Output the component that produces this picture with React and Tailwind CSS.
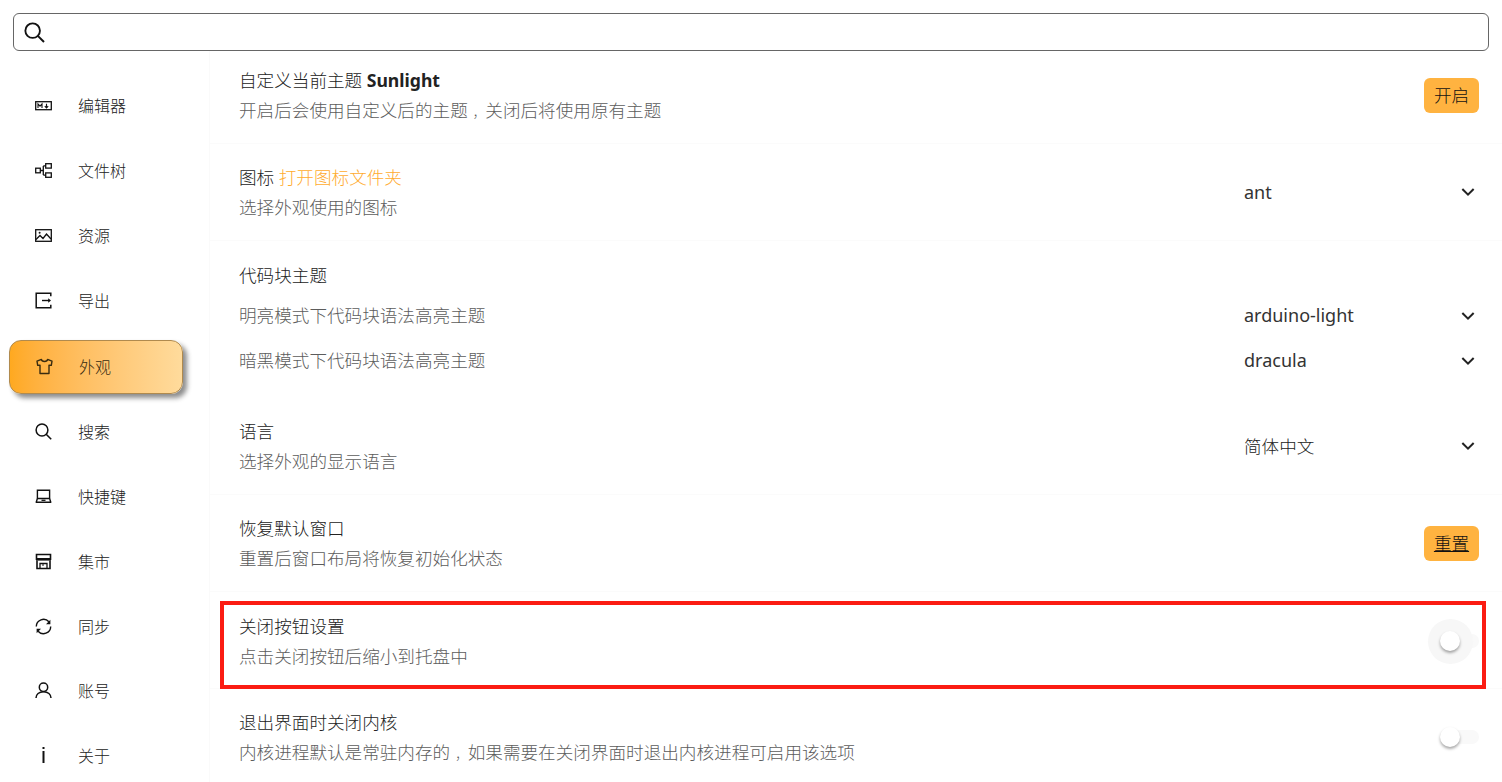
import React from 'react';
import { RiArrowDownSLine } from 'react-icons/ri';

const font = { fontFamily: '"Noto Sans", "Noto Sans CJK SC", sans-serif' };

function Svg({ children, size = 17 }) {
    return (
        <svg width={size} height={size} viewBox="0 0 17 17" fill="none" stroke="currentColor" strokeWidth="1.3" className="shrink-0">
            {children}
        </svg>
    );
}

const MarkdownIcon = () => (
    <Svg>
        <rect x="0.7" y="4.7" width="15.6" height="8" />
        <path d="M3 11V7l2 2.2L7 7v4" strokeWidth="1.1" />
        <path d="M11.5 6.8v4M9.8 9.2l1.7 1.8 1.7-1.8" strokeWidth="1.1" />
    </Svg>
);
const TreeIcon = () => (
    <Svg>
        <rect x="0.7" y="6.2" width="4.6" height="4.6" />
        <rect x="10.7" y="1.7" width="5.6" height="4.4" />
        <rect x="10.7" y="10.9" width="5.6" height="4.4" />
        <path d="M5.3 8.5h3M8.3 3.9v9.2M8.3 3.9h2.4M8.3 13.1h2.4" />
    </Svg>
);
const ImageIcon = () => (
    <Svg>
        <rect x="0.7" y="2.7" width="15.6" height="11.6" />
        <path d="M1 12.5l4-4 3 3 3.5-4.5 4.5 5" />
        <circle cx="4.6" cy="5.8" r="1" fill="currentColor" stroke="none" />
    </Svg>
);
const ExportIcon = () => (
    <Svg>
        <path d="M15.8 4.2V1.2H1.2v14.6h14.6v-3" strokeWidth="1.5" />
        <path d="M7 8.5h7.5" strokeWidth="1.4" />
        <path d="M13.2 6.3L16 8.5l-2.8 2.2z" fill="currentColor" stroke="none" />
    </Svg>
);
const ShirtIcon = () => (
    <Svg>
        <path d="M5.4 1.4L1 3.2l0.7 4.2 2.3-0.3v8.4h9V7.1l2.3 0.3L16 3.2l-4.4-1.8c-0.4 2.8-5.8 2.8-6.2 0z" strokeLinejoin="round" strokeWidth="1.4" />
    </Svg>
);
const SearchIcon = ({ size = 17 }) => (
    <svg width={size} height={size} viewBox="0 0 17 17" fill="none" stroke="currentColor" strokeWidth="1.5" className="shrink-0">
        <circle cx="7" cy="7" r="5.9" />
        <path d="M11.2 11.2l5 5" strokeWidth="1.6" />
    </svg>
);
const LaptopIcon = () => (
    <Svg>
        <path d="M2.4 10.5V2.2h12.2v8.3" strokeWidth="1.4" />
        <path d="M2.4 10.5h12.2l1.2 3.8H1.2z" strokeWidth="1.4" strokeLinejoin="round" />
        <path d="M6.5 12.3h4" />
    </Svg>
);
const StoreIcon = () => (
    <Svg>
        <path d="M1.5 7V1.5h14V7" strokeWidth="1.6" />
        <path d="M1 5h15v2.6H1z" fill="currentColor" stroke="none" />
        <path d="M2 7.5v8h13v-8" strokeWidth="1.6" />
        <path d="M5 15v-4.5h7V15" strokeWidth="1.3" />
        <path d="M8 11v2" strokeWidth="1" />
    </Svg>
);
const SyncIcon = () => (
    <Svg>
        <path d="M1.3 8.5a7.2 7.2 0 0 1 12.6-4.7" strokeWidth="1.4" />
        <path d="M15.7 8.5a7.2 7.2 0 0 1-12.6 4.7" strokeWidth="1.4" />
        <path d="M15.4 1.8v4.4H11z" fill="currentColor" stroke="none" />
        <path d="M1.6 15.2v-4.4H6z" fill="currentColor" stroke="none" />
    </Svg>
);
const UserIcon = () => (
    <Svg>
        <circle cx="8.5" cy="5.2" r="4.2" strokeWidth="1.5" />
        <path d="M1 16c0-3.6 3-6.3 7.5-6.3s7.5 2.7 7.5 6.3" strokeWidth="1.5" />
    </Svg>
);
const InfoIcon = () => (
    <Svg>
        <rect x="7.5" y="0" width="2" height="2" fill="currentColor" stroke="none" />
        <rect x="7.5" y="4" width="2" height="12" fill="currentColor" stroke="none" />
    </Svg>
);

const navItems = [
    { label: '编辑器', icon: MarkdownIcon },
    { label: '文件树', icon: TreeIcon },
    { label: '资源', icon: ImageIcon },
    { label: '导出', icon: ExportIcon },
    { label: '外观', icon: ShirtIcon, active: true },
    { label: '搜索', icon: SearchIcon },
    { label: '快捷键', icon: LaptopIcon },
    { label: '集市', icon: StoreIcon },
    { label: '同步', icon: SyncIcon },
    { label: '账号', icon: UserIcon, nudge: '-mt-px' },
    { label: '关于', icon: InfoIcon },
];

function NavItem({ label, icon: Icon, active, nudge = '' }) {
    if (active) {
        return (
            <div className="h-[65px] mt-px shrink-0 flex items-center pl-[9px]">
                <div className="w-[174px] h-[54px] flex items-center pl-[26px] rounded-[12px] border border-[#b08a4e] bg-gradient-to-r from-[#ffa91f] to-[#ffdb9c] shadow-[4px_4px_5px_rgba(0,0,0,0.45)] text-[#3a2c10]">
                    <Icon />
                    <span className="ml-[26px] text-base font-light">{label}</span>
                </div>
            </div>
        );
    }
    return (
        <div className={`h-[65px] shrink-0 flex items-center pl-[35px] text-[#111] ${nudge}`}>
            <Icon />
            <span className="ml-[26px] text-base font-light text-[#222]">{label}</span>
        </div>
    );
}

// the comma sits mid-cell in the reference, the CJK glyph sits left
function Comma() {
    return <span className="pl-[5px] text-[12.6px] leading-none">，</span>;
}

function Title({ children }) {
    return <div className="text-[17.6px] leading-[30px] text-[#222] font-light">{children}</div>;
}

function Desc({ children }) {
    return <div className="text-[17.6px] leading-[31px] text-[#5c5c5c] font-light">{children}</div>;
}

function Select({ value, cjk }) {
    return (
        <div className="w-[236px] flex items-center justify-between text-[18px] text-[#333]">
            <span className={cjk ? 'text-[17.6px] font-light text-[#222]' : ''}>{value}</span>
            <RiArrowDownSLine size={24} className="text-[#222]" />
        </div>
    );
}

function Button({ children }) {
    return (
        <div className="w-[55px] h-[35px] mr-[1px] flex items-center justify-center rounded-[6px] bg-[#ffb340] text-[17.6px] text-[#111] font-light">
            {children}
        </div>
    );
}

function Toggle({ halo }) {
    return (
        <div className="relative w-[39px] h-[14px] mr-[1px]">
            <div className="absolute left-[6px] right-0 top-0 bottom-0 rounded-full bg-[#f9f9f9]" />
            {halo && <div className="absolute left-[-12px] top-[-15px] w-[45px] h-[45px] rounded-full bg-[#f7f7f7]" />}
            <div className="absolute left-0 top-[-3px] w-[20px] h-[20px] rounded-full bg-white shadow-[0_2px_3px_rgba(0,0,0,0.35)]" />
        </div>
    );
}

function Row({ title, desc, right, className = 'h-[97px]' }) {
    return (
        <div className={`relative flex items-center justify-between shrink-0 border-b border-[#fbfbfb] pl-[29px] pr-[22px] ${className}`}>
            <div>
                <Title>{title}</Title>
                <Desc>{desc}</Desc>
            </div>
            {right}
        </div>
    );
}

export default function App() {
    return (
        <div className="w-[1502px] h-[782px] overflow-hidden bg-white flex flex-col" style={font}>
            <div className="shrink-0 mx-[13px] mt-[13px] h-[38px] rounded-[6px] border border-[#666] flex items-center pl-[10px] text-[#111]">
                <SearchIcon size={21} />
            </div>
            <div className="flex flex-1 min-h-0">
                <aside className="w-[209px] shrink-0 pt-[22px] flex flex-col">
                    {navItems.map((item) => (
                        <NavItem key={item.label} {...item} />
                    ))}
                </aside>
                <main className="flex-1 flex flex-col border-l border-[#fafafa]">
                    <Row
                        className="h-[93px] pb-[3px] border-[#f8f8f8]"
                        title={<>自定义当前主题 <b className="font-bold text-[#222]">Sunlight</b></>}
                        desc={<>开启后会使用自定义后的主题<Comma />关闭后将使用原有主题</>}
                        right={<Button>开启</Button>}
                    />
                    <Row
                        title={<>图标 <span className="text-[#ffab2e]">打开图标文件夹</span></>}
                        desc="选择外观使用的图标"
                        right={<Select value="ant" />}
                    />
                    <div className="h-[157px] shrink-0 pt-[19px] pl-[29px] pr-[22px] flex flex-col">
                        <Title>代码块主题</Title>
                        <div className="mt-[3px] h-[45px] flex items-center justify-between">
                            <span className="text-[17.6px] text-[#5c5c5c] font-light">明亮模式下代码块语法高亮主题</span>
                            <Select value="arduino-light" />
                        </div>
                        <div className="h-[45px] flex items-center justify-between">
                            <span className="text-[17.6px] text-[#5c5c5c] font-light">暗黑模式下代码块语法高亮主题</span>
                            <Select value="dracula" />
                        </div>
                    </div>
                    <Row title="语言" desc="选择外观的显示语言" right={<Select cjk value="简体中文" />} />
                    <Row title="恢复默认窗口" desc="重置后窗口布局将恢复初始化状态" right={<Button><span className="underline">重置</span></Button>} />
                    <Row title="关闭按钮设置" desc="点击关闭按钮后缩小到托盘中" className="h-[97px] pt-[2px]" right={<Toggle halo />} />
                    <Row title="退出界面时关闭内核" desc={<>内核进程默认是常驻内存的<Comma />如果需要在关闭界面时退出内核进程可启用该选项</>} right={<Toggle />} />
                </main>
            </div>
            <RedBox />
        </div>
    );
}

// annotation drawn over the screenshot
function RedBox() {
    return <div className="fixed left-[220px] top-[601px] w-[1266px] h-[88px] border-4 border-[#fb1c12] pointer-events-none" />;
}
